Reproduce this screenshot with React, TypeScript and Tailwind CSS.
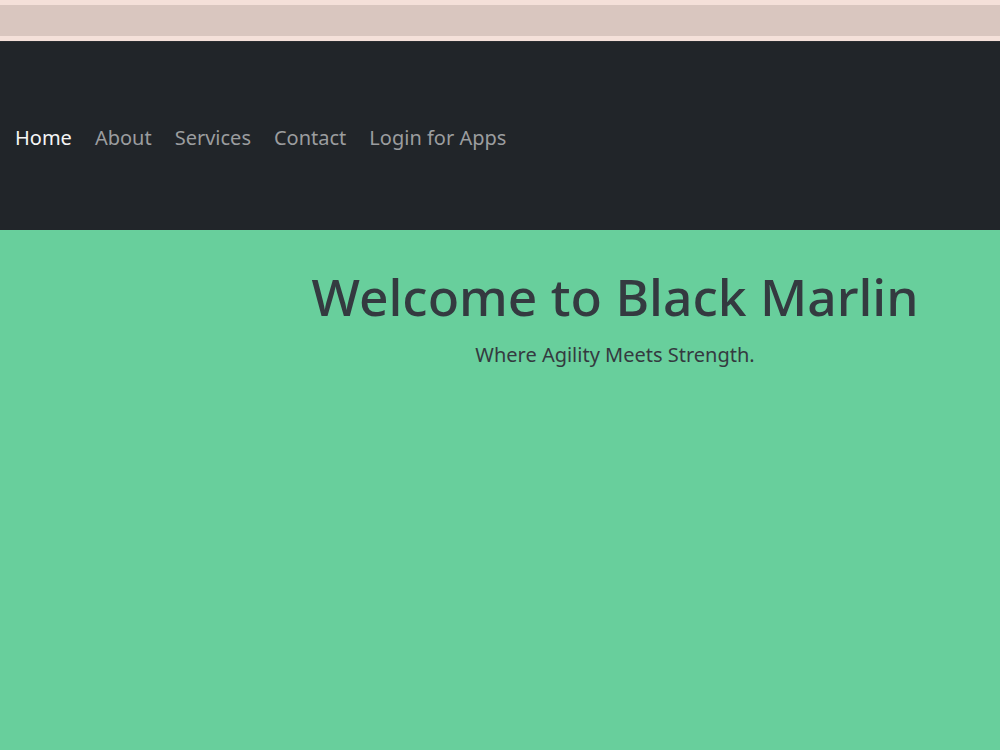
export default function App() {
  const font = { fontFamily: '"Noto Sans", "Open Sans", sans-serif' };
  return (
    <div className="w-[1000px] h-[750px] overflow-hidden flex flex-col bg-[#68cf9c]" style={font}>
      <div className="h-[5px] bg-[#f4e0d9]" />
      <div className="h-[31px] bg-[#d9c6bf]" />
      <div className="h-[5px] bg-[#f4e0d9]" />
      <nav className="h-[189px] bg-[#212529] border-t border-[#2a2d31] flex items-center pl-[15px] pt-[4px] gap-[23px] text-[20px]">
        <a className="text-[#f5f5f5]">Home</a>
        <a className="text-[#9b9d9f]">About</a>
        <a className="text-[#9b9d9f]">Services</a>
        <a className="text-[#9b9d9f]">Contact</a>
        <a className="text-[#9b9d9f]">Login for Apps</a>
      </nav>
      <main className="flex-1 bg-[#68cf9c] pl-[230px] pt-[36px] flex flex-col items-center text-[#343a40]">
        <h1 className="text-[51.5px] leading-[1.2] font-medium">Welcome to Black Marlin</h1>
        <p className="text-[20px] leading-[1.5] mt-[12px]">Where Agility Meets Strength.</p>
      </main>
    </div>
  );
}
